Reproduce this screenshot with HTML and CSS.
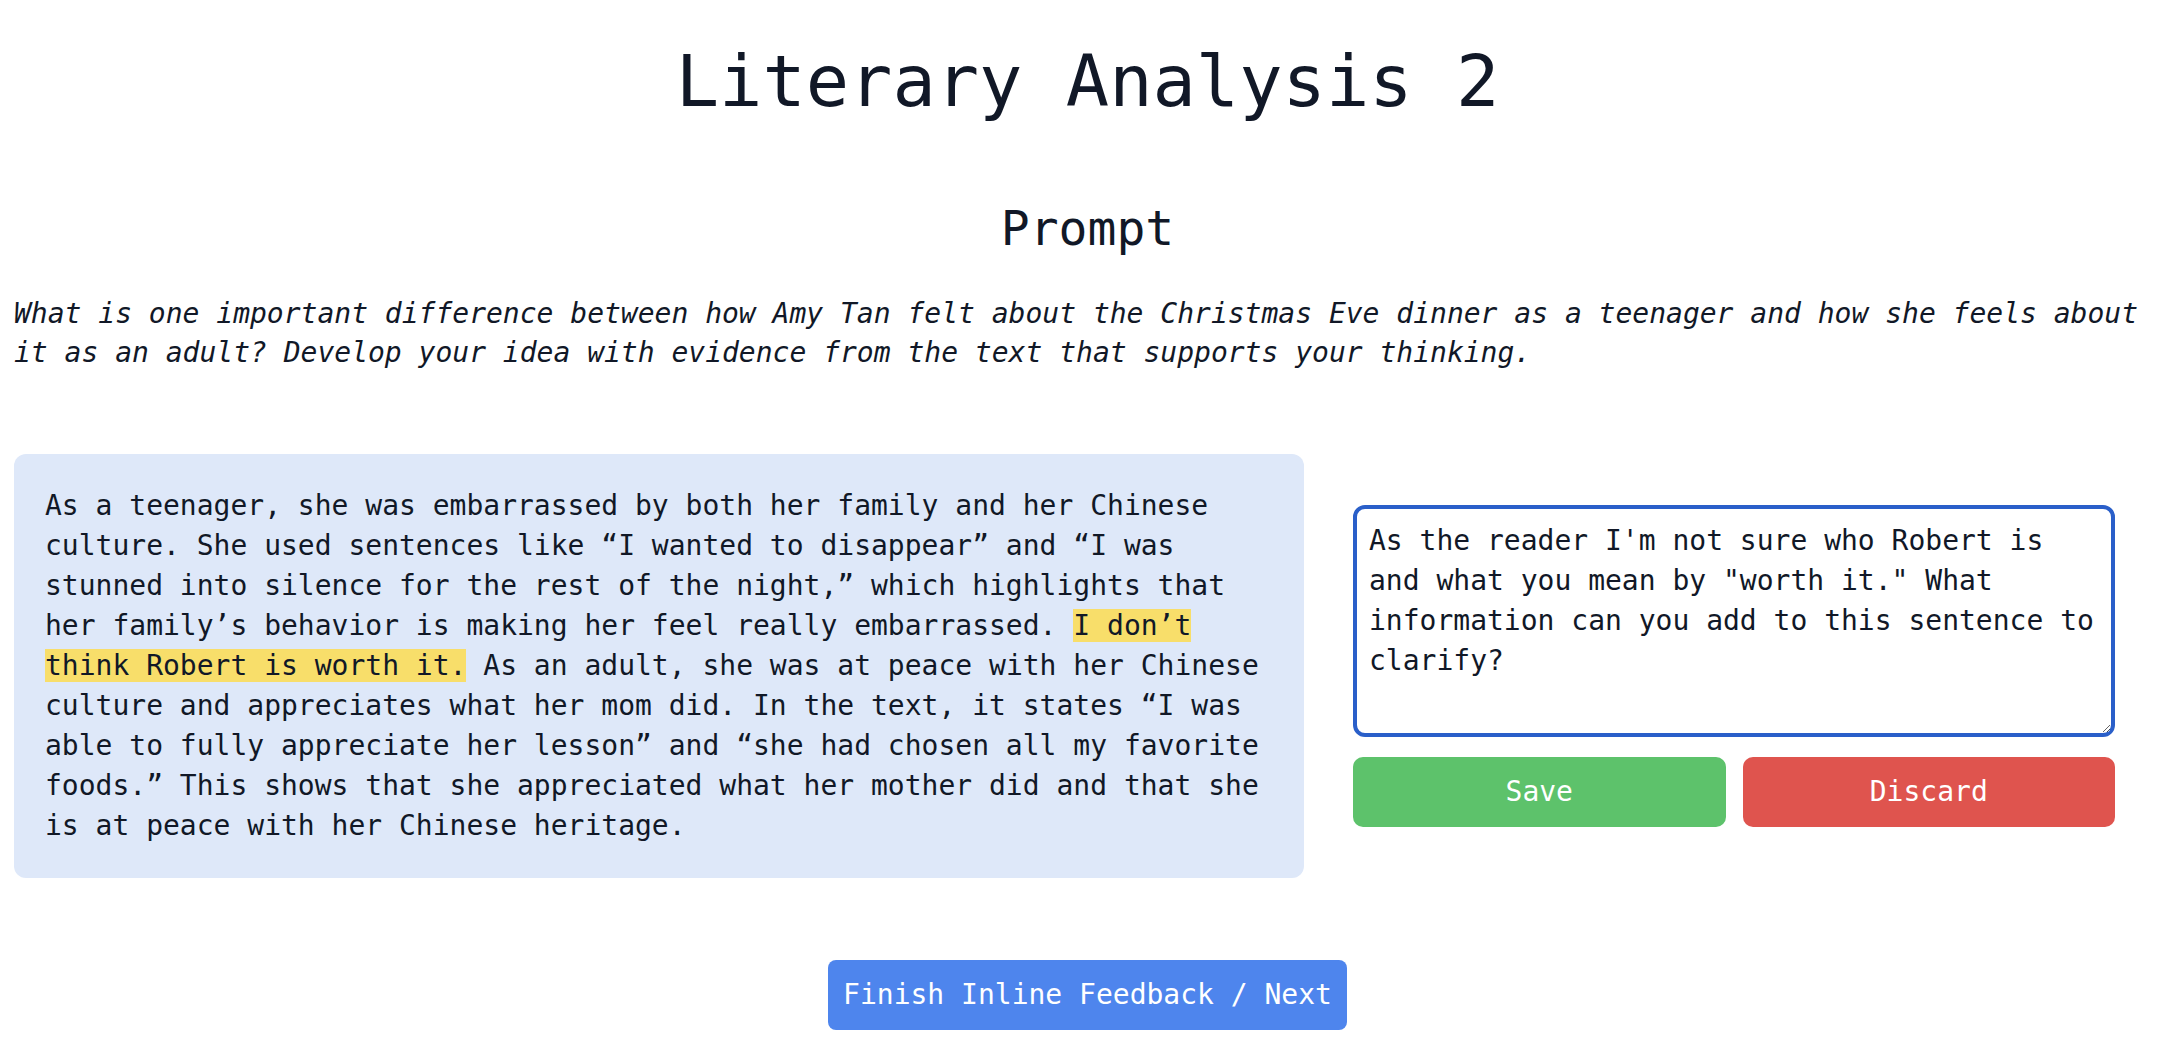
FILE: index.html
```html
<!DOCTYPE html>
<html lang="en">
<head>
<meta charset="utf-8">
<title>Literary Analysis 2</title>
<link rel="stylesheet" href="styles.css">
</head>
<body>
<div class="page">
  <h1 class="title">Literary Analysis 2</h1>
  <h2 class="subtitle">Prompt</h2>
  <p class="prompt">What is one important difference between how Amy Tan felt about the Christmas Eve dinner as a teenager and how she feels about it as an adult? Develop your idea with evidence from the text that supports your thinking.</p>
  <div class="row">
    <div class="essay">As a teenager, she was embarrassed by both her family and her Chinese culture. She used sentences like “I wanted to disappear” and “I was stunned into silence for the rest of the night,” which highlights that her family’s behavior is making her feel really embarrassed. <mark class="hl">I don’t</mark> <mark class="hl">think Robert is worth it.</mark> As an adult, she was at peace with her Chinese culture and appreciates what her mom did. In the text, it states “I was able to fully appreciate her lesson” and “she had chosen all my favorite foods.” This shows that she appreciated what her mother did and that she is at peace with her Chinese heritage.</div>
    <div class="feedback">
      <textarea class="comment">As the reader I'm not sure who Robert is and what you mean by "worth it." What information can you add to this sentence to clarify?</textarea>
      <div class="actions">
        <button class="btn save">Save</button>
        <button class="btn discard">Discard</button>
      </div>
    </div>
  </div>
  <div class="footer">
    <button class="btn next">Finish Inline Feedback / Next</button>
  </div>
</div>
</body>
</html>
```
FILE: styles.css
```css
body {
  margin: 0;
  background: #ffffff;
  color: #111827;
  font-family: "DejaVu Sans Mono", "Liberation Mono", monospace;
}

.page {
  padding: 45px 0 0 14px;
}

.title {
  margin: 0;
  text-align: center;
  font-size: 72px;
  line-height: 72px;
  font-weight: 400;
}

.subtitle {
  margin: 87px 0 0;
  text-align: center;
  font-size: 48px;
  line-height: 48px;
  font-weight: 400;
}

.prompt {
  margin: 42px 0 0;
  padding-right: 14px;
  font-style: italic;
  font-size: 28px;
  line-height: 39px;
}

.row {
  margin-top: 82px;
  display: grid;
  grid-template-columns: 1290px 762px;
  column-gap: 49px;
  align-items: center;
}

.essay {
  background: #dee8f9;
  border-radius: 12px;
  padding: 32px 31px;
  font-size: 28px;
  line-height: 40px;
}

.hl {
  background: #f8de6a;
  color: inherit;
}

.feedback {
  display: flex;
  flex-direction: column;
  gap: 20px;
}

.comment {
  box-sizing: border-box;
  width: 100%;
  height: 232px;
  margin: 0;
  border: 4px solid #2a5fc9;
  border-radius: 12px;
  padding: 12px 12px;
  font-family: "DejaVu Sans Mono", "Liberation Mono", monospace;
  font-size: 28px;
  line-height: 40px;
  color: #111827;
  outline: none;
}

.actions {
  display: grid;
  grid-template-columns: 1fr 1fr;
  gap: 17px;
}

.btn {
  border: none;
  color: #ffffff;
  font-family: "DejaVu Sans Mono", "Liberation Mono", monospace;
  font-size: 28px;
  line-height: 40px;
  border-radius: 10px;
  padding: 15px;
}

.save {
  background: #5dc26b;
}

.discard {
  background: #df544e;
}

.footer {
  display: flex;
  justify-content: center;
  margin-top: 82px;
}

.next {
  background: #4e85ed;
  border-radius: 8px;
}
```
